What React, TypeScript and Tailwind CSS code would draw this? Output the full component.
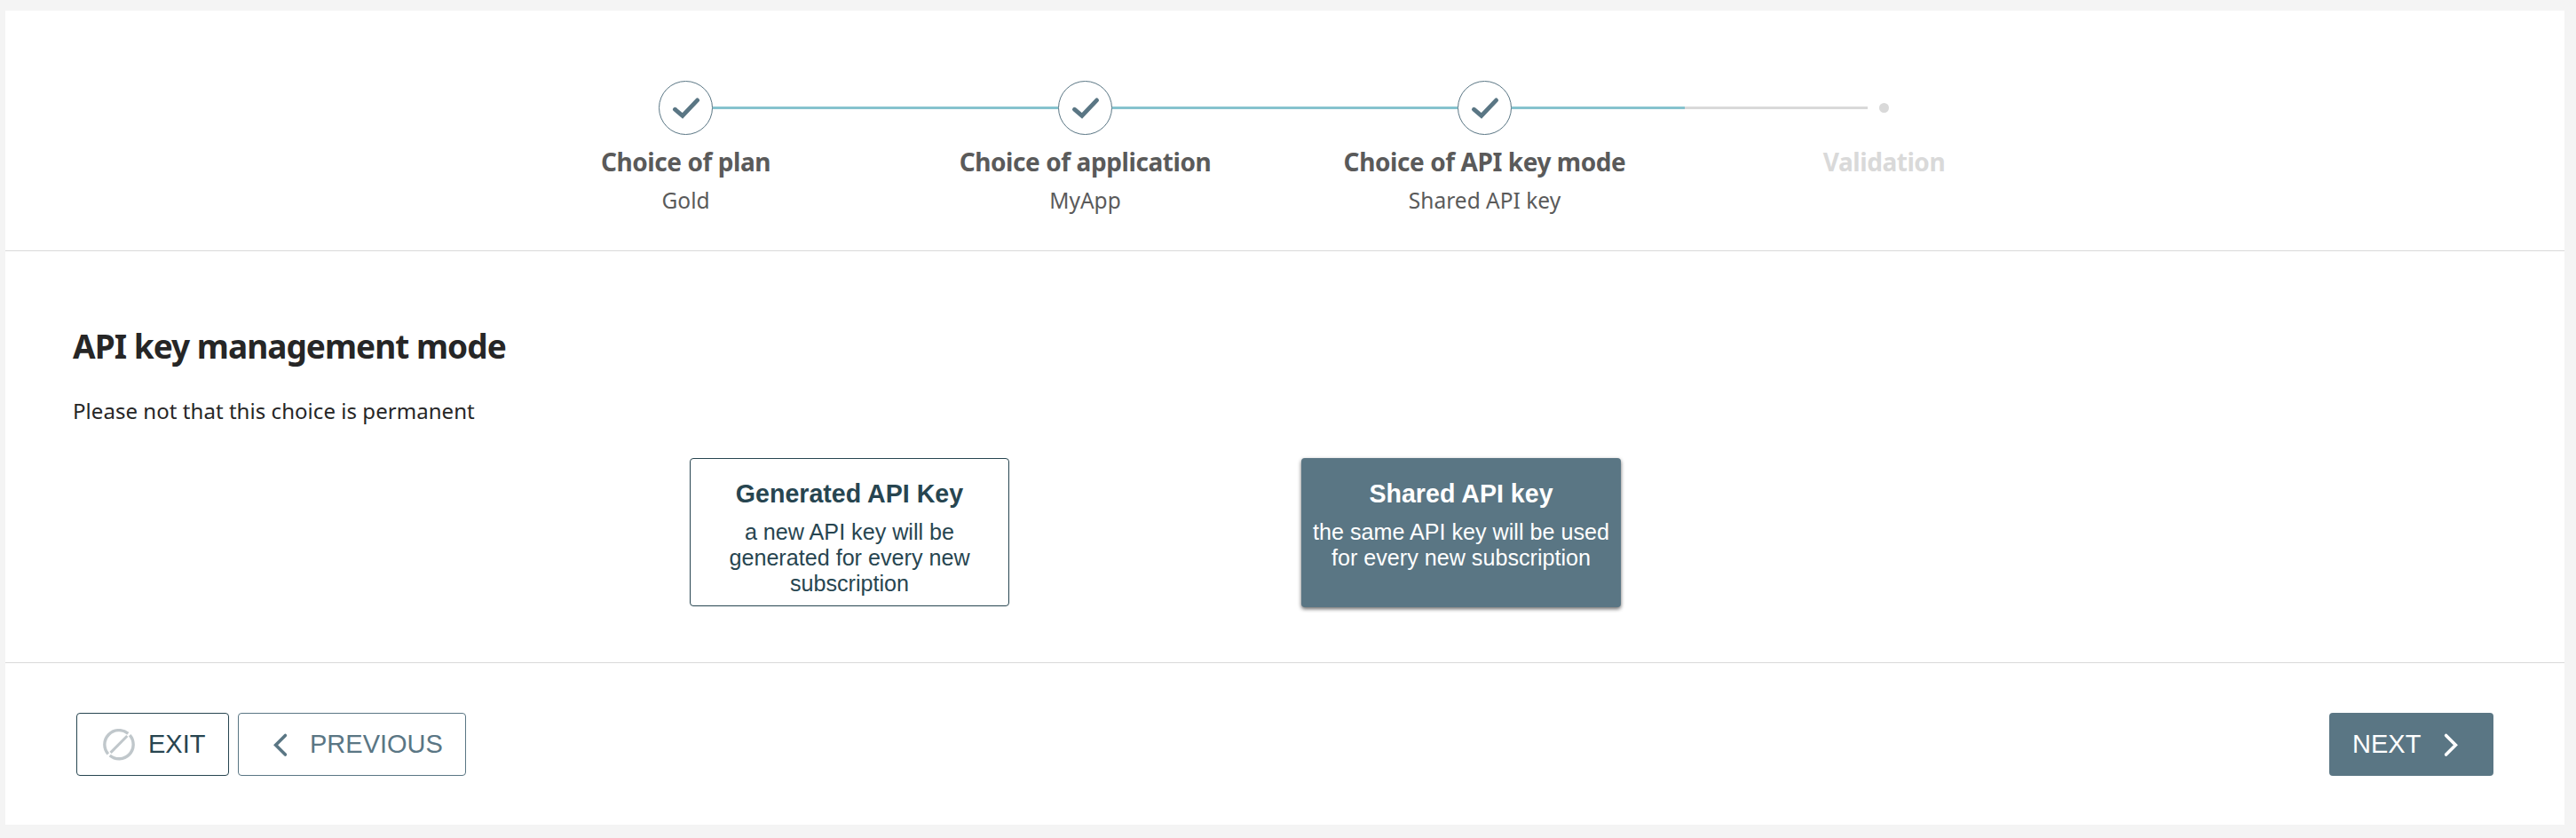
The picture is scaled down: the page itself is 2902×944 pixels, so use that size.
type StepProps = {
  title: string;
  value?: string;
  first?: boolean;
  pending?: boolean;
};

function Step({ title, value, first, pending }: StepProps) {
  return (
    <li className="flex w-[450px] flex-col items-center">
      <div className="flex h-[61px] w-full items-center">
        {pending ? (
          <>
            <div className="mr-[13px] h-[3px] flex-1 bg-[#d9d9d9]" />
            <div className="size-[11px] rounded-full bg-[#d9d9d9]" />
            <div className="ml-[13px] h-[3px] flex-1" />
          </>
        ) : (
          <>
            <div className={first ? "h-[3px] flex-1" : "h-[3px] flex-1 bg-[#86c3ce]"} />
            <div className="size-[61px] rounded-full border border-[#5a7684]">
              <svg className="size-[59px]" viewBox="1 1 59 59" fill="none" stroke="#5a7684" strokeWidth="4.8" strokeLinecap="round">
                <path d="M18.4 32.2 26.9 39.4 43.6 21.9" />
              </svg>
            </div>
            <div className="h-[3px] flex-1 bg-[#86c3ce]" />
          </>
        )}
      </div>
      <div
        className={
          pending
            ? "mt-2.5 text-[28px] leading-[40px] font-bold tracking-[-0.45px] text-[#d9d9d9]"
            : "mt-2.5 text-[28px] leading-[40px] font-bold tracking-[-0.42px] text-[#5a5a5a]"
        }
      >
        {title}
      </div>
      {value && <div className="mt-2 text-[24.5px] leading-8 text-[#5a5a5a]">{value}</div>}
    </li>
  );
}

export default function App() {
  return (
    <div className="h-[944px] w-[2902px] bg-[#f4f4f4] pt-3 pr-[13px] pb-[15px] pl-1.5 font-['Noto_Sans',sans-serif]">
      <main className="flex h-full flex-col bg-white">
        <header className="h-[271px] border-b border-[#d9d9d9] pt-[79px]">
          <ol className="flex justify-center">
            <Step title="Choice of plan" value="Gold" first />
            <Step title="Choice of application" value="MyApp" />
            <Step title="Choice of API key mode" value="Shared API key" />
            <Step title="Validation" pending />
          </ol>
        </header>

        <section className="h-[464px] border-b border-[#d9d9d9] pt-[82px] pl-[76px] text-[#262626]">
          <h1 className="text-[37px] leading-[50px] font-bold tracking-[-0.97px]">API key management mode</h1>
          <p className="mt-8 text-[24px] leading-8 tracking-[0.05px]">Please not that this choice is permanent</p>
          <div className="mt-[37px] ml-[695px] flex items-start gap-[329px] font-['Liberation_Sans',Arial,sans-serif]">
            <button className="flex h-[167px] w-[360px] flex-col items-center rounded-[4px] border border-[#274550] px-2.5 pt-[23px] text-[#274550]">
              <span className="text-[28.6px] leading-8 font-bold">Generated API Key</span>
              <span className="mt-[13px] text-[25.15px] leading-[29px]">a new API key will be generated for every new subscription</span>
            </button>
            <button className="flex h-[168px] w-[360px] flex-col items-center rounded-[4px] bg-[#5a7684] px-2.5 pt-6 text-white shadow-[0_2px_4px_rgba(0,0,0,0.6)]">
              <span className="text-[28.6px] leading-8 font-bold">Shared API key</span>
              <span className="mt-[13px] text-[25.15px] leading-[29px]">the same API key will be used for every new subscription</span>
            </button>
          </div>
        </section>

        <footer className="flex items-start gap-2.5 px-20 pt-14 font-['Liberation_Sans',Arial,sans-serif] text-[29px] leading-8">
          <button className="flex h-[71px] w-[172px] items-center rounded-[4px] border border-[#274550] pl-[29px] text-[#274550]">
            <svg className="size-9" viewBox="0 0 36 36" fill="none" stroke="#c0c7cb" strokeWidth="3.4">
              <path d="M30.2 7.1A16.1 16.1 0 0 1 7.7 30" />
              <path d="M5.8 28.3A16.1 16.1 0 0 1 28.3 5.4" />
              <path d="M8.6 26.9 27.3 8" strokeWidth="3" />
            </svg>
            <span className="ml-[15px] pb-0.5">EXIT</span>
          </button>
          <button className="flex h-[71px] w-[257px] items-center rounded-[4px] border border-[#5a7684] pl-[29px] text-[#5a7684]">
            <svg className="size-9" viewBox="0 0 36 36" fill="none" stroke="currentColor" strokeWidth="3.6" strokeLinecap="round">
              <path d="M23.4 7.4 12.6 18.2 23.4 29" />
            </svg>
            <span className="ml-[15px] pb-0.5">PREVIOUS</span>
          </button>
          <button className="ml-auto flex h-[71px] w-[185px] items-center rounded-[4px] bg-[#5a7684] pl-[26px] text-white">
            <span className="pb-0.5">NEXT</span>
            <svg className="ml-4 size-9" viewBox="0 0 36 36" fill="none" stroke="currentColor" strokeWidth="3.6" strokeLinecap="round">
              <path d="M12.6 7.4 23.4 18.2 12.6 29" />
            </svg>
          </button>
        </footer>
      </main>
    </div>
  );
}
